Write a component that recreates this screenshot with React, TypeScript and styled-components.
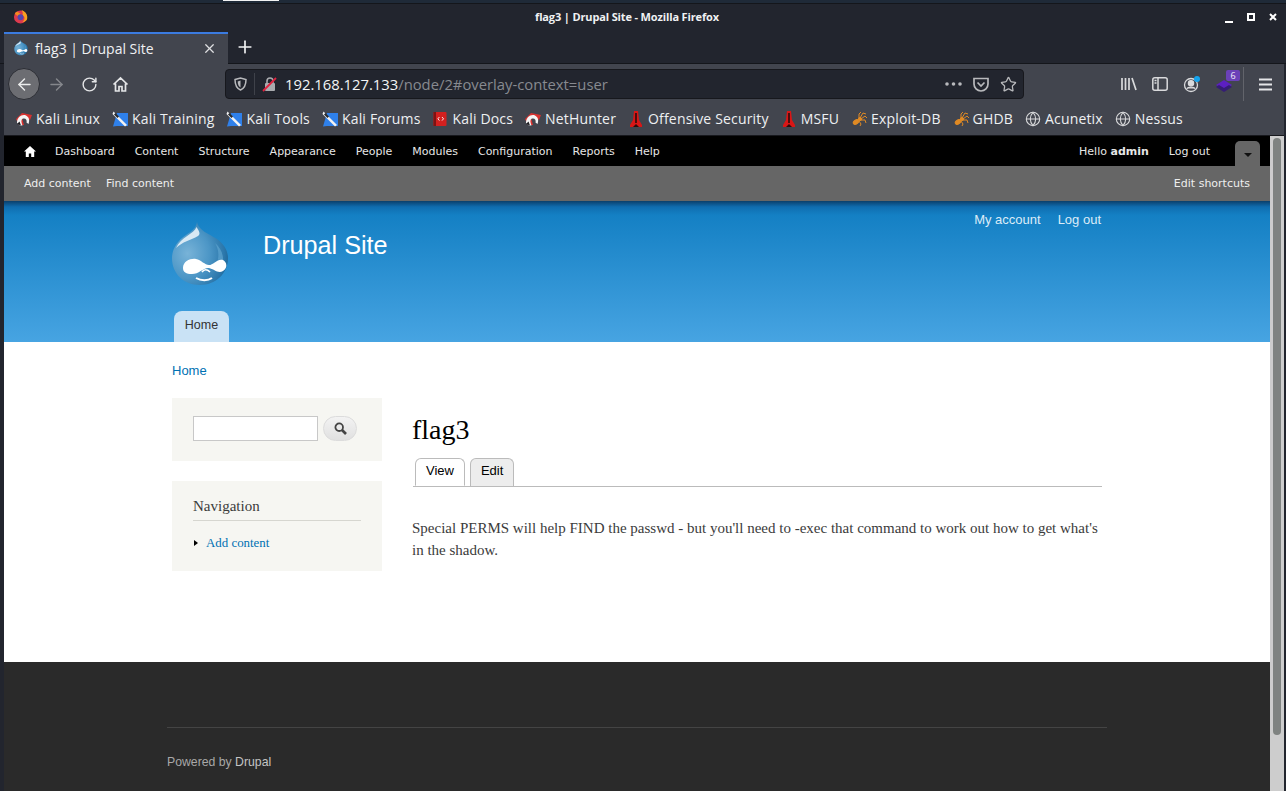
import React, { FC } from 'react'
import styled, { createGlobalStyle } from 'styled-components'
import { ArrowLeft, ArrowRight, Globe, Plus, RotateCw, Star, X } from 'lucide-react'

const GlobalStyle = createGlobalStyle`
  html, body { margin: 0; padding: 0; background: #22252e; overflow: hidden; }
  * { box-sizing: border-box; }
`

const uiFont = `"Open Sans", "Noto Sans", sans-serif`
const adminFont = `"DejaVu Sans", sans-serif`
const sansFont = `"Liberation Sans", Arial, sans-serif`
const serifFont = `"Liberation Serif", "Times New Roman", serif`

const Screen = styled.div`
  width: 1286px;
  height: 791px;
  display: flex;
  flex-direction: column;
  overflow: hidden;
  background: #22252e;
`

const DesktopStrip = styled.div`
  height: 3px;
  background: #1f2a38;
  padding-left: 223px;
`

const StripMark = styled.div`
  width: 56px;
  height: 1px;
  background: #f2f2f2;
`

const TitleBar = styled.div`
  height: 29px;
  display: flex;
  align-items: center;
  justify-content: center;
  position: relative;
  color: #f0f1f3;
  font: 700 11px ${uiFont};
  letter-spacing: -0.14px;
  padding: 0 32px 3px 0;
  border-top: 1px solid #14161b;
`

const AppIcon = styled.span`
  position: absolute;
  left: 13px;
  top: 5px;
  line-height: 0;
`

const WindowControls = styled.div`
  position: absolute;
  right: 9px;
  top: 9px;
  display: flex;
  gap: 14px;
  line-height: 0;
`

const TabStrip = styled.div`
  height: 32px;
  display: flex;
  align-items: stretch;
  padding-left: 4px;
  box-shadow: inset 0 -1px #14161b;
`

const Tab = styled.div`
  width: 224px;
  height: 32px;
  background: #42454e;
  border-top: 2px solid #3b7be0;
  display: flex;
  align-items: center;
  padding: 0 11px 2px 10px;
  gap: 7px;
  color: #f0f1f3;
  font: 400 14px ${uiFont};
`

const TabTitle = styled.span`
  flex: 1;
`

const NewTab = styled.div`
  width: 34px;
  padding-bottom: 3px;
  display: flex;
  align-items: center;
  justify-content: center;
  color: #f2f3f5;
`

const Toolbar = styled.div`
  height: 36px;
  margin: 0 2px 0 4px;
  padding-top: 4px;
  background: #42454e;
  display: flex;
  align-items: center;
  position: relative;
`

const BackButton = styled.div`
  width: 32px;
  height: 32px;
  margin-left: 4px;
  border-radius: 50%;
  background: #6c6d72;
  border: 1px solid #2c2e35;
  display: flex;
  align-items: center;
  justify-content: center;
  color: #eceded;
`

const NavIcon = styled.span<{ $left: number; $color?: string }>`
  margin-left: ${p => p.$left}px;
  line-height: 0;
  color: ${p => p.$color || '#e4e5e7'};
`

const UrlBar = styled.div`
  width: 799px;
  height: 30px;
  margin-left: 96px;
  background: #22252e;
  border: 1px solid #17181d;
  border-radius: 4px;
  display: flex;
  align-items: center;
  color: #b8b9bc;
  font: 400 14.8px ${uiFont};
  position: relative;
`

const UrlDivider = styled.span`
  width: 1px;
  height: 22px;
  background: #3f424a;
  margin: 0 7px 0 7px;
`

const UrlHost = styled.span`
  color: #f4f5f6;
`

const UrlPath = styled.span`
  color: #878a90;
`

const UrlEnd = styled.div`
  margin-left: auto;
  padding-right: 6px;
  display: flex;
  align-items: center;
  gap: 11px;
  line-height: 0;
`

const ToolRight = styled.div`
  margin-left: 97px;
  display: flex;
  align-items: center;
  gap: 15px;
  line-height: 0;
`

const ToolDivider = styled.span`
  width: 1px;
  height: 34px;
  background: #62646b;
  margin-left: -5px;
`

const ExtBadge = styled.span`
  position: absolute;
  right: 44px;
  top: 6px;
  width: 14px;
  height: 11px;
  background: #6b41b8;
  border-radius: 2px;
  color: #f0ecf9;
  font: 400 9px/11px ${uiFont};
  text-align: center;
`

const Bookmarks = styled.div`
  height: 36px;
  margin: 0 2px 0 4px;
  padding: 3px 0 0 12px;
  background: #42454e;
  border-bottom: 1px solid #17181d;
  display: flex;
  align-items: center;
  gap: 12px;
  color: #eef0f2;
  font: 400 14px ${uiFont};
  letter-spacing: 0.17px;
`

const Bookmark = styled.div`
  display: flex;
  align-items: center;
  gap: 4px;
  white-space: nowrap;
  line-height: 0;
`

const BookmarkLabel = styled.span`
  line-height: 18px;
`

const PageArea = styled.div`
  flex: 1;
  min-height: 0;
  margin: 0 2px 0 4px;
  display: flex;
`

const Site = styled.div`
  width: 1266px;
  display: flex;
  flex-direction: column;
  background: #fff;
`

const Scrollbar = styled.div`
  width: 14px;
  background: #cdcdcd;
  padding: 2px 3px 0 3px;
`

const ScrollThumb = styled.div`
  width: 8px;
  height: 597px;
  background: #7f8381;
  border-radius: 4px;
`

const AdminBar = styled.div`
  height: 30px;
  background: #000;
  display: flex;
  align-items: center;
  padding-left: 20px;
  gap: 20px;
  color: #e6e6e6;
  font: 400 11px ${adminFont};
`

const AdminHome = styled.span`
  line-height: 0;
  width: 11px;
`

const AdminRight = styled.div`
  margin-left: auto;
  align-self: stretch;
  display: flex;
  align-items: center;
  gap: 20px;
  padding-right: 10px;
`

const Toggle = styled.div`
  width: 25px;
  height: 25px;
  align-self: flex-end;
  margin-left: 5px;
  background: #666;
  border-radius: 5px 5px 0 0;
  display: flex;
  align-items: center;
  justify-content: center;
  padding-top: 2px;
`

const ToggleArrow = styled.span`
  width: 0;
  height: 0;
  border-style: solid;
  border-width: 4px 4px 0 4px;
  border-color: #111 transparent transparent transparent;
`

const ShortcutBar = styled.div`
  height: 35px;
  background: #666;
  display: flex;
  align-items: center;
  padding: 0 20px;
  gap: 15px;
  color: #eee;
  font: 400 11px ${adminFont};
`

const EditShortcuts = styled.span`
  margin-left: auto;
`

const Header = styled.header`
  height: 141px;
  background: linear-gradient(to bottom, #0a3f6b 0, #0f6db0 6px, #1480c4 14px, #47a4e2 100%);
  color: #fff;
  font-family: ${sansFont};
`

const Section = styled.div`
  width: 940px;
  margin: 0 auto;
`

const HeaderInner = styled(Section)`
  height: 100%;
  display: flex;
  flex-direction: column;
  position: relative;
`

const Brand = styled.div`
  display: flex;
  align-items: flex-start;
  padding: 21px 0 0 4px;
  height: 110px;
`

const SiteName = styled.div`
  font-size: 25.2px;
  line-height: 30px;
  margin: 8px 0 0 34px;
`

const SecondaryMenu = styled.div`
  position: absolute;
  right: 6px;
  top: 11px;
  display: flex;
  gap: 17px;
  color: #dcecf8;
  font-size: 13px;
`

const PrimaryTab = styled.div`
  width: 55px;
  height: 31px;
  margin-left: 7px;
  background: #c9e2f5;
  border-radius: 8px 8px 0 0;
  color: #333;
  font-size: 12.5px;
  line-height: 29px;
  text-align: center;
`

const Body = styled.main`
  height: 320px;
  background: #fff;
`

const Breadcrumb = styled.div`
  padding: 21px 5px 0;
  height: 56px;
  color: #0071b3;
  font: 400 13px/15px ${sansFont};
`

const Columns = styled.div`
  display: grid;
  grid-template-columns: 210px 690px;
  column-gap: 30px;
  padding: 0 5px;
`

const Sidebar = styled.aside`
  display: flex;
  flex-direction: column;
  gap: 20px;
`

const Block = styled.div`
  background: #f6f6f2;
  padding: 18px 21px 0;
`

const SearchRow = styled.div`
  height: 45px;
  display: flex;
  gap: 5px;
`

const SearchInput = styled.div`
  width: 125px;
  height: 25px;
  background: #fff;
  border: 1px solid #c8c8c8;
`

const SearchButton = styled.div`
  width: 34px;
  height: 25px;
  border-radius: 13px;
  border: 1px solid #dcdcdc;
  background: linear-gradient(#f3f3f3, #e0e0e0);
  display: flex;
  align-items: center;
  justify-content: center;
  line-height: 0;
`

const BlockTitle = styled.div`
  width: 168px;
  height: 22px;
  border-bottom: 1px solid #d6d6d0;
  color: #3b3b3b;
  font: 400 15px/15px ${serifFont};
`

const MenuRow = styled.div`
  height: 50px;
  display: flex;
  align-items: center;
  padding: 0 0 6px 1px;
  gap: 8px;
  color: #0071b3;
  font: 400 12.9px ${serifFont};
`

const MenuArrow = styled.span`
  width: 0;
  height: 0;
  border-style: solid;
  border-width: 3.5px 0 3.5px 4px;
  border-color: transparent transparent transparent #000;
`

const Article = styled.article``

const PageTitle = styled.h1`
  margin: 16px 0 0;
  color: #000;
  font: 400 28px/32px ${serifFont};
`

const Tabs = styled.div`
  height: 29px;
  margin: 12px 0 0 1px;
  padding-left: 2px;
  display: flex;
  gap: 5px;
  border-bottom: 1px solid #bbb;
`

const TabLink = styled.div<{ $active?: boolean }>`
  height: 28px;
  padding: 0 10px;
  background: ${p => (p.$active ? '#fff' : '#ededed')};
  border: 1px solid #bbb;
  border-bottom: ${p => (p.$active ? '1px solid #fff' : '0')};
  border-radius: 6px 6px 0 0;
  color: #000;
  font: 400 13px/23px ${sansFont};
`

const Paragraph = styled.p`
  margin: 30px 0 0;
  color: #3b3b3b;
  font: 400 15px/22px ${serifFont};
`

const Footer = styled.footer`
  flex: 1;
  background: #2a2a2a;
  padding-top: 65px;
  color: #a8a8a8;
  font: 400 12.25px/15px ${sansFont};
`

const FooterInner = styled(Section)`
  border-top: 1px solid #444;
  padding-top: 27px;
`

const FooterLink = styled.span`
  color: #c4c4c4;
`

const DropMark: FC<{ size: number; id: string }> = ({ size, id }) => (
  <svg width={size} height={size * 64 / 58} viewBox="0 0 58 64">
    <defs>
      <radialGradient id={id} cx="0.28" cy="0.5" r="0.78">
        <stop offset="0" stopColor="#78b3d8" />
        <stop offset="0.5" stopColor="#4c96c6" />
        <stop offset="0.85" stopColor="#2a76aa" />
        <stop offset="1" stopColor="#1c618f" />
      </radialGradient>
    </defs>
    <path d="M26 0C27 8 38 12 46 17C53 22 57 29 57 36C57 52 44 63 29 63C13 63 1 52 1 36C1 27 7 18 15 13C21 9 25 6 26 0Z" fill={`url(#${id})`} />
    <path d="M25.5 5C23 12 10 15 5 26C11 20 20 18 27 14C30 12 28 9 25.5 5Z" fill="#e6f1f8" opacity="0.9" />
    <path d="M44 21C51 27 54 36 51 45L47 37C48 31 47 26 44 21Z" fill="#5ea4cf" opacity="0.7" />
    <path d="M12 46C12 39 20 36 25 37C30 38 34 43 38 43C42 43 47 36 52 38C56 40 57 46 52 49C47 52 43 47 38 46C33 45 28 52 21 52C15 52 12 50 12 46Z" fill="#fff" />
    <path d="M25 56C30 59 37 59 41 56" fill="none" stroke="#fff" strokeWidth="2" />
    <path d="M31 50C33 47 36 47 39 50" fill="none" stroke="#fff" strokeWidth="1.6" />
  </svg>
)

const FirefoxMark: FC = () => (
  <svg width="15" height="15" viewBox="0 0 16 16">
    <circle cx="8" cy="8.5" r="7" fill="#dc3a4e" />
    <path d="M9 1C14 3 16 7 15 11C14 13 12 14 10 14C13 12 13 8 10 6.5C11 5 10.5 3 9 1Z" fill="#f7a11e" />
    <path d="M2 5C3 3 4 3 5 3C6 4 8 4.5 8 5.5L5.5 7.5C4 7 3 6 2 5Z" fill="#f58a1f" />
    <circle cx="8" cy="8.8" r="3.1" fill="#5246b0" />
  </svg>
)

const DragonIcon: FC = () => (
  <svg width="16" height="16" viewBox="0 0 16 16">
    <path d="M0 8L6 2L16 4L14 9L11 7L6 7L8 14L3 14Z" fill="#d8312f" />
    <path d="M1 12C1 6 6 3 10 4.5C13 6 14 9 12.5 13L10.5 11.5C11.5 8.5 9 6.5 6.5 7.8C5 9 5 11 6.5 14.5L4 14.5Z" fill="#f4f4f4" />
    <path d="M1 13L3.5 10.5L5 14.5Z" fill="#1c1d22" />
  </svg>
)

const ToolsIcon: FC = () => (
  <svg width="16" height="16" viewBox="0 0 16 16">
    <path d="M5 2H16V15H5L1 15.5Z" fill="#2f80ea" />
    <path d="M1.5 0.5L15 14L13 15.5L0.5 3Z" fill="#f3f3f3" />
    <path d="M3.5 2L7 5.5L5.5 7L2 3.5Z" fill="#26282e" />
  </svg>
)

const DocsIcon: FC = () => (
  <svg width="16" height="16" viewBox="0 0 16 16">
    <rect x="1.5" y="1" width="13" height="14" rx="1" fill="#d3201f" />
    <rect x="1.5" y="1" width="2.5" height="14" fill="#7d1313" />
    <path d="M7.4 6L5.9 7.8L7.4 9.6M10 6L11.5 7.8L10 9.6" stroke="#fff" strokeWidth="0.9" fill="none" />
  </svg>
)

const OffsecIcon: FC = () => (
  <svg width="16" height="18" viewBox="0 0 16 18">
    <path d="M6 1H10L11 10L14 15V17H2V15L5 10Z" fill="#d81616" />
    <path d="M7.2 3H8.8V13H7.2Z" fill="#2a0c0c" />
    <path d="M5 17L8 14L11 17Z" fill="#2a0c0c" />
  </svg>
)

const SpiderIcon: FC = () => (
  <svg width="16" height="16" viewBox="0 0 16 16" fill="none" stroke="#e08a24" strokeWidth="1">
    <ellipse cx="5" cy="11" rx="3" ry="2" fill="#e08a24" transform="rotate(-35 5 11)" />
    <circle cx="9" cy="8" r="1.6" fill="#e08a24" />
    <path d="M9 7L12 2L15 3M10 8L14 5L16 7M10 9L14 9L15 12M8 7L8 3L10 1M8 10L10 13L9 15" />
  </svg>
)

const WhiteGlobe: FC = () => <Globe size={16} color="#d9dadc" strokeWidth={1.6} />

const bookmarks: { label: string; icon: React.ReactNode }[] = [
  { label: 'Kali Linux', icon: <DragonIcon /> },
  { label: 'Kali Training', icon: <ToolsIcon /> },
  { label: 'Kali Tools', icon: <ToolsIcon /> },
  { label: 'Kali Forums', icon: <ToolsIcon /> },
  { label: 'Kali Docs', icon: <DocsIcon /> },
  { label: 'NetHunter', icon: <DragonIcon /> },
  { label: 'Offensive Security', icon: <OffsecIcon /> },
  { label: 'MSFU', icon: <OffsecIcon /> },
  { label: 'Exploit-DB', icon: <SpiderIcon /> },
  { label: 'GHDB', icon: <SpiderIcon /> },
  { label: 'Acunetix', icon: <WhiteGlobe /> },
  { label: 'Nessus', icon: <WhiteGlobe /> },
]

const adminLinks = ['Dashboard', 'Content', 'Structure', 'Appearance', 'People', 'Modules', 'Configuration', 'Reports', 'Help']

const App: FC = () => {
  return (
    <Screen>
      <GlobalStyle />
      <DesktopStrip>
        <StripMark />
      </DesktopStrip>
      <TitleBar>
        <AppIcon>
          <FirefoxMark />
        </AppIcon>
        flag3 | Drupal Site - Mozilla Firefox
        <WindowControls>
          <svg width="8" height="10" viewBox="0 0 8 10"><rect y="8" width="8" height="2" fill="#fff" /></svg>
          <svg width="8" height="8" viewBox="0 0 8 8"><rect x="1" y="1" width="6" height="6" fill="none" stroke="#fff" strokeWidth="2" /></svg>
          <svg width="8" height="8" viewBox="0 0 8 8"><path d="M1 1L7 7M7 1L1 7" stroke="#fff" strokeWidth="2" /></svg>
        </WindowControls>
      </TitleBar>
      <TabStrip>
        <Tab>
          <DropMark size={14} id="favdrop" />
          <TabTitle>flag3 | Drupal Site</TabTitle>
          <X size={15} color="#dfe0e2" />
        </Tab>
        <NewTab>
          <Plus size={20} strokeWidth={2} />
        </NewTab>
      </TabStrip>
      <Toolbar>
        <BackButton>
          <ArrowLeft size={19} strokeWidth={1.8} />
        </BackButton>
        <NavIcon $left={7} $color="#85878c">
          <ArrowRight size={19} strokeWidth={1.8} />
        </NavIcon>
        <NavIcon $left={15}>
          <RotateCw size={17} strokeWidth={2} />
        </NavIcon>
        <NavIcon $left={14}>
          <svg width="17" height="17" viewBox="0 0 17 17" fill="none" stroke="#e4e5e7" strokeWidth="1.7">
            <path d="M1.5 8.5L8.5 2L15.5 8.5M3.5 7.5V15H7V10.5H10V15H13.5V7.5" />
          </svg>
        </NavIcon>
        <UrlBar>
          <NavIcon $left={8} $color="#b8b9bc">
            <svg width="13" height="14" viewBox="0 0 13 14" fill="none" stroke="#b8b9bc" strokeWidth="1.5">
              <path d="M1 2.5L6.5 1L12 2.5C12 8 10 11.5 6.5 13C3 11.5 1 8 1 2.5Z" />
              <path d="M6.5 3.5V10.5C4.5 9.5 3.8 7 3.7 4.4Z" fill="#b8b9bc" stroke="none" />
            </svg>
          </NavIcon>
          <UrlDivider />
          <NavIcon $left={0}>
            <svg width="15" height="16" viewBox="0 0 15 16">
              <rect x="3" y="7" width="10" height="8" rx="1" fill="#a9abaf" />
              <path d="M5 7V5a3 3 0 0 1 6 0v2" fill="none" stroke="#a9abaf" strokeWidth="1.6" />
              <path d="M1 15L14 2" stroke="#e0223f" strokeWidth="1.8" />
            </svg>
          </NavIcon>
          <NavIcon $left={8} />
          <UrlHost>192.168.127.133</UrlHost>
          <UrlPath>/node/2#overlay-context=user</UrlPath>
          <UrlEnd>
            <svg width="17" height="4" viewBox="0 0 17 4" fill="#b8b9bc">
              <circle cx="2" cy="2" r="1.8" /><circle cx="8.5" cy="2" r="1.8" /><circle cx="15" cy="2" r="1.8" />
            </svg>
            <svg width="16" height="15" viewBox="0 0 16 15" fill="none" stroke="#b8b9bc" strokeWidth="1.7">
              <path d="M1 1.5H15V7A7 7 0 0 1 1 7Z" />
              <path d="M4.5 5.5L8 9L11.5 5.5" />
            </svg>
            <Star size={17} color="#b8b9bc" strokeWidth={1.8} />
          </UrlEnd>
        </UrlBar>
        <ToolRight>
          <svg width="16" height="14" viewBox="0 0 16 14" fill="none" stroke="#d9dadc" strokeWidth="1.7">
            <path d="M1 1V13M4.5 1V13M8 1V13M11 1L15 13" />
          </svg>
          <svg width="16" height="14" viewBox="0 0 16 14" fill="none" stroke="#d9dadc" strokeWidth="1.5">
            <rect x="0.8" y="0.8" width="14.4" height="12.4" rx="2" />
            <path d="M6 1V13M2.5 3.5H4.5M2.5 6H4.5" />
          </svg>
          <svg width="18" height="18" viewBox="0 0 18 18" fill="none" stroke="#d9dadc" strokeWidth="1.3">
            <circle cx="8" cy="10" r="6.5" />
            <circle cx="8" cy="8.2" r="2.6" fill="#d9dadc" />
            <path d="M3.8 13.6C5 11.7 11 11.7 12.2 13.6" fill="#d9dadc" />
            <circle cx="14" cy="4" r="3" fill="#14a4ef" stroke="none" />
          </svg>
          <svg width="17" height="17" viewBox="0 0 17 17">
            <path d="M0 9L8 4L16 9L8 14Z" fill="#5c1fc2" />
            <path d="M0 11L8 16L16 11L13 9L8 12L3 9Z" fill="#351c75" />
          </svg>
          <ExtBadge>6</ExtBadge>
          <ToolDivider />
          <svg width="13" height="13" viewBox="0 0 13 13" fill="#e4e5e7">
            <rect y="0.5" width="13" height="2" /><rect y="5.5" width="13" height="2" /><rect y="10.5" width="13" height="2" />
          </svg>
        </ToolRight>
      </Toolbar>
      <Bookmarks>
        {bookmarks.map(item => (
          <Bookmark key={item.label}>
            {item.icon}
            <BookmarkLabel>{item.label}</BookmarkLabel>
          </Bookmark>
        ))}
      </Bookmarks>
      <PageArea>
        <Site>
          <AdminBar>
            <AdminHome>
              <svg width="12" height="11" viewBox="0 0 12 11" fill="#fff">
                <path d="M6 0L12 5.5H10.2V11H7.2V7.5H4.8V11H1.8V5.5H0Z" />
              </svg>
            </AdminHome>
            {adminLinks.map(link => (
              <span key={link}>{link}</span>
            ))}
            <AdminRight>
              <span>
                Hello <strong>admin</strong>
              </span>
              <span>Log out</span>
              <Toggle>
                <ToggleArrow />
              </Toggle>
            </AdminRight>
          </AdminBar>
          <ShortcutBar>
            <span>Add content</span>
            <span>Find content</span>
            <EditShortcuts>Edit shortcuts</EditShortcuts>
          </ShortcutBar>
          <Header>
            <HeaderInner>
              <Brand>
                <DropMark size={58} id="logodrop" />
                <SiteName>Drupal Site</SiteName>
              </Brand>
              <SecondaryMenu>
                <span>My account</span>
                <span>Log out</span>
              </SecondaryMenu>
              <PrimaryTab>Home</PrimaryTab>
            </HeaderInner>
          </Header>
          <Body>
            <Section>
              <Breadcrumb>Home</Breadcrumb>
              <Columns>
                <Sidebar>
                  <Block>
                    <SearchRow>
                      <SearchInput />
                      <SearchButton>
                        <svg width="13" height="13" viewBox="0 0 13 13" fill="none" stroke="#444">
                          <circle cx="5.2" cy="5.2" r="3.8" strokeWidth="1.8" />
                          <path d="M8 8L12 12" strokeWidth="2.6" />
                        </svg>
                      </SearchButton>
                    </SearchRow>
                  </Block>
                  <Block>
                    <BlockTitle>Navigation</BlockTitle>
                    <MenuRow>
                      <MenuArrow />
                      <span>Add content</span>
                    </MenuRow>
                  </Block>
                </Sidebar>
                <Article>
                  <PageTitle>flag3</PageTitle>
                  <Tabs>
                    <TabLink $active>View</TabLink>
                    <TabLink>Edit</TabLink>
                  </Tabs>
                  <Paragraph>
                    Special PERMS will help FIND the passwd - but you'll need to -exec that command to work out how to get what's in the shadow.
                  </Paragraph>
                </Article>
              </Columns>
            </Section>
          </Body>
          <Footer>
            <FooterInner>
              Powered by <FooterLink>Drupal</FooterLink>
            </FooterInner>
          </Footer>
        </Site>
        <Scrollbar>
          <ScrollThumb />
        </Scrollbar>
      </PageArea>
    </Screen>
  )
}

export default App
